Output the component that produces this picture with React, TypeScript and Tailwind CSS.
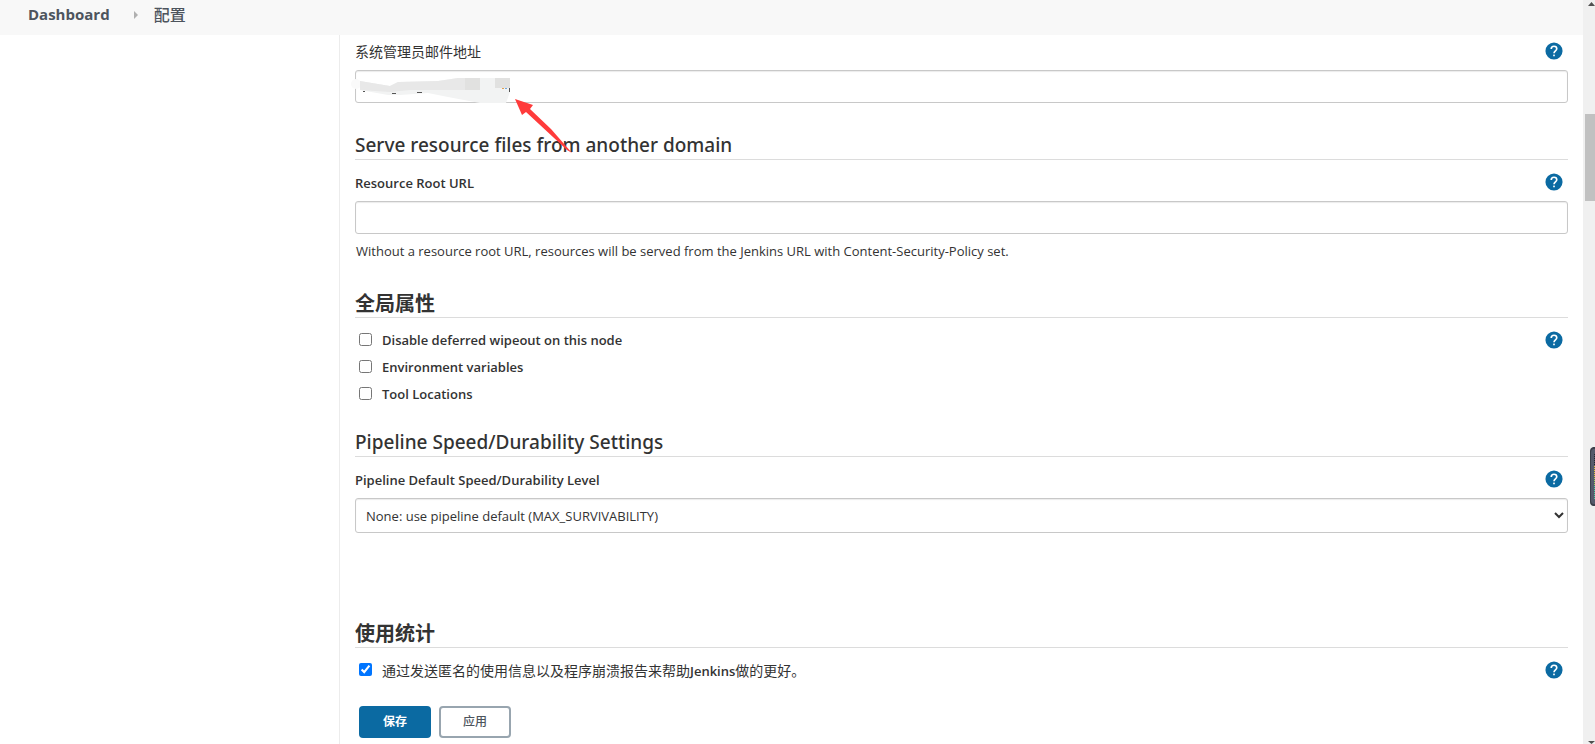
import { useState } from "react";
import type { ReactNode } from "react";

const HelpLink = ({ topic }: { topic: string }) => (
  <a href="#help" aria-label={`Help: ${topic}`} className="mr-[5px] mb-0.5 shrink-0">
    <svg className="h-[18px] w-[18px]" viewBox="0 0 24 24">
      <circle cx="12" cy="12" r="11.4" fill="#0b6aa2" />
      <path
        d="M8.3 9.4c0-2.2 1.6-3.8 3.7-3.8s3.7 1.5 3.7 3.5c0 2.6-3.7 2.9-3.7 5.9"
        fill="none"
        stroke="#fff"
        strokeWidth="2.2"
      />
      <rect x="10.9" y="16.8" width="2.2" height="2.2" fill="#fff" />
    </svg>
  </a>
);

const SectionTitle = ({ children, className = "" }: { children: ReactNode; className?: string }) => (
  <h2 className={`h-[29px] border-b border-[#dcdcdc] ${className}`}>{children}</h2>
);

type FieldLabelProps = {
  id: string;
  children: string;
  className?: string;
};

const FieldLabel = ({ id, children, className = "text-[13px] font-semibold" }: FieldLabelProps) => (
  <div className="mb-1.5 flex h-6 items-center justify-between">
    <label htmlFor={id} className={className}>
      {children}
    </label>
    <HelpLink topic={children} />
  </div>
);

const TextField = ({ id }: { id: string }) => (
  <input
    id={id}
    type="text"
    className="block h-[33px] w-full rounded-[3px] border border-[#c8c8c8] bg-white px-2 shadow-[inset_0_1px_1px_rgba(0,0,0,0.08)] outline-none"
  />
);

type CheckRowProps = {
  children: ReactNode;
  help?: string;
  defaultChecked?: boolean;
  className?: string;
};

const CheckRow = ({ children, help, defaultChecked, className = "text-[13px] font-semibold" }: CheckRowProps) => {
  const [checked, setChecked] = useState(!!defaultChecked);
  return (
    <div className="flex h-[27px] items-center justify-between pb-0.5">
      <label className={`flex items-center gap-2.5 pl-1 ${className}`}>
        <input
          type="checkbox"
          className="mb-0.5 h-[13px] w-[13px]"
          checked={checked}
          onChange={(e) => setChecked(e.target.checked)}
        />
        <span>{children}</span>
      </label>
      {help && <HelpLink topic={help} />}
    </div>
  );
};

const ScrollTrack = () => (
  <div className="relative flex w-3 shrink-0 flex-col justify-between bg-[#f0f0f0]">
    <svg className="ml-[5px] h-2 w-[7px]" viewBox="0 0 7 8">
      <path d="M0 6L3.5 2L7 6Z" fill="#505050" />
    </svg>
    <svg className="ml-[5px] h-1 w-[7px]" viewBox="0 0 7 4">
      <path d="M0 1H7L3.5 4Z" fill="#505050" />
    </svg>
    <div className="absolute top-[114px] right-0 h-[87px] w-2.5 bg-[#c1c1c1]" />
    <svg className="absolute top-[447px] right-0 h-[59px] w-[5px]" viewBox="0 0 5 59">
      <path d="M5 0H3Q0 1 0 4V55Q0 58 3 59H5Z" fill="#3c3f4a" />
      <path d="M5 2H3Q1 3 1 5V54Q1 56 3 57H5Z" fill="#555a6b" />
      <path d="M4.5 7V19" stroke="#22242c" strokeDasharray="1 1" />
      <path d="M4.5 19V31" stroke="#e0c040" strokeDasharray="1 1" />
      <path d="M4.5 31V39" stroke="#a0d060" strokeDasharray="1 1" />
      <path d="M4.5 39V53" stroke="#50d0a0" strokeDasharray="1 1" />
    </svg>
  </div>
);

const App = () => {
  return (
    <div className="flex min-h-screen bg-white font-['Open_Sans','Noto_Sans_CJK_SC',sans-serif] text-sm text-[#333]">
      <div className="flex min-w-0 flex-1 flex-col">
        <header className="flex h-[35px] items-center bg-[#f8f8f8] pb-[5px] pl-7 text-[#4d545d]">
          <a href="#dashboard" className="text-[15px] font-bold">
            Dashboard
          </a>
          <svg className="mr-4 ml-6 h-2 w-1" viewBox="0 0 4 8">
            <path d="M0 0L4 4L0 8Z" fill="#b0b0b0" />
          </svg>
          <a href="#configure" className="text-base font-medium">
            配置
          </a>
        </header>
        <div className="flex flex-1">
          <aside className="w-[340px] shrink-0 border-r border-[#ececec]" />
          <main className="min-w-0 flex-1 pt-[5px] pr-[15px] pb-1.5 pl-[15px]">
            <FieldLabel id="admin-email" className="text-sm">
              系统管理员邮件地址
            </FieldLabel>
            <div className="relative">
              <TextField id="admin-email" />
              <svg className="pointer-events-none absolute -top-0.5 -left-[7px] h-[90px] w-[230px]" viewBox="0 0 230 90">
                <circle cx="8" cy="16" r="5" fill="#fafafa" />
                <path
                  d="M12 13L42 18L50 14L90 13L110 10H162V24L158 35H132L100 29L80 25L52 27L40 27L12 22Z"
                  fill="#f2f3f3"
                />
                <path d="M12 13L42 18L50 14L90 13L110 10H132V22H62L42 24L12 22Z" fill="#e8e8e8" />
                <path d="M117 10H132V22H117ZM147 10H162V20H147Z" fill="#e1e1e0" />
                <path d="M15 23.500h2M44 25.500h4M69 24.500h5M161.500 20v4" stroke="#555" fill="none" />
                <path d="M154 20.500h2" stroke="#e0a050" />
                <path d="M157 20.500h2" stroke="#70a8e0" />
                <path d="M167 31L185 37L182 41L203 61L224 85L219 82L178 44L174 47Z" fill="#ff3b3b" />
              </svg>
            </div>

            <SectionTitle className="mt-7 font-['Noto_Sans',sans-serif] text-[19px] leading-7 font-medium">
              Serve resource files from another domain
            </SectionTitle>
            <div className="pt-[11px]">
              <FieldLabel id="resource-root">Resource Root URL</FieldLabel>
              <TextField id="resource-root" />
              <p className="mt-[5px] pl-px text-[13px] leading-6">
                Without a resource root URL, resources will be served from the Jenkins URL with Content-Security-Policy set.
              </p>
            </div>

            <SectionTitle className="mt-[26px] text-xl leading-[30px] font-bold">全局属性</SectionTitle>
            <div className="pt-2.5">
              <CheckRow help="Disable deferred wipeout on this node">Disable deferred wipeout on this node</CheckRow>
              <CheckRow>Environment variables</CheckRow>
              <CheckRow>Tool Locations</CheckRow>
            </div>

            <SectionTitle className="mt-[19px] font-['Noto_Sans',sans-serif] text-[19px] leading-7 font-medium">
              Pipeline Speed/Durability Settings
            </SectionTitle>
            <div className="pt-[11px]">
              <FieldLabel id="durability">Pipeline Default Speed/Durability Level</FieldLabel>
              <select
                id="durability"
                className="block h-[35px] w-full rounded-[3px] border border-[#c8c8c8] bg-white px-1.5 text-[13px] shadow-[inset_0_1px_1px_rgba(0,0,0,0.08)]"
              >
                <option>None: use pipeline default (MAX_SURVIVABILITY)</option>
              </select>
            </div>

            <SectionTitle className="mt-[86px] text-xl leading-[30px] font-bold">使用统计</SectionTitle>
            <div className="pt-2.5">
              <CheckRow help="使用统计" defaultChecked className="text-sm">
                通过发送匿名的使用信息以及程序崩溃报告来帮助<span className="text-[13px] font-semibold">Jenkins</span>做的更好。
              </CheckRow>
            </div>

            <div className="mt-[21px] flex gap-2 pl-1 text-xs">
              <button type="button" className="h-8 w-[72px] rounded bg-[#0b6aa2] font-bold text-white">
                保存
              </button>
              <button
                type="button"
                className="h-8 w-[72px] rounded border-2 border-[#98a5af] bg-white font-medium text-[#4d545d]"
              >
                应用
              </button>
            </div>
          </main>
        </div>
      </div>
      <ScrollTrack />
    </div>
  );
};

export default App;
